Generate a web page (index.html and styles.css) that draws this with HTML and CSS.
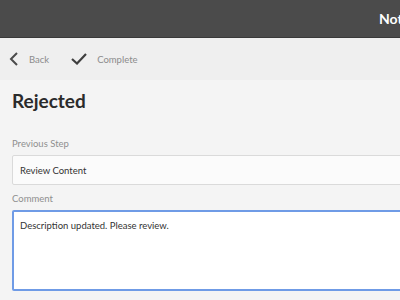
FILE: index.html
```html
<!DOCTYPE html>
<html lang="en">

<head>
    <meta charset="UTF-8" />
    <title>Rejected</title>
    <meta name="viewport" content="width=device-width, initial-scale=1" />
    <link rel="stylesheet" href="styles.css">
</head>

<body>
    <header class="topbar">
        <span class="topbar-title">Notifications</span>
    </header>

    <nav class="toolbar">
        <a class="tool" href="#">
            <svg class="tool-icon" width="10" height="14" viewBox="0 0 10 14">
                <path d="M8 1 L2 7 L8 13" fill="none" stroke="#4b4b4b" stroke-width="2" />
            </svg>
            <span>Back</span>
        </a>
        <a class="tool" href="#">
            <svg class="tool-icon" width="16" height="12" viewBox="0 0 16 12">
                <path d="M1 6 L6 10.5 L15 1" fill="none" stroke="#3f3f3f" stroke-width="2.2" />
            </svg>
            <span>Complete</span>
        </a>
    </nav>

    <main class="content">
        <h1>Rejected</h1>
        <form class="step-form">
            <label class="field-label" for="prevStep">Previous Step</label>
            <input type="text" id="prevStep" class="field" value="Review Content" readonly>

            <label class="field-label" for="comment">Comment</label>
            <textarea id="comment" class="field comment">Description updated. Please review.</textarea>
        </form>
    </main>
</body>

</html>
```

FILE: styles.css
```css
/* base */

* {
    box-sizing: border-box;
    font-family: Lato, "Liberation Sans", sans-serif;
}

body {
    margin: 0;
    width: 400px;
    height: 300px;
    overflow: hidden;
    background: #f4f4f4;
}
/* top bar */

.topbar {
    height: 38px;
    background: #4b4b4b;
    border-bottom: 1px solid #393939;
    display: flex;
    align-items: center;
    padding-left: 379px;
    white-space: nowrap;
    overflow: hidden;
}

.topbar-title {
    color: #fff;
    font-size: 14px;
    font-weight: bold;
}
/* toolbar */

.toolbar {
    height: 42px;
    background: #efefef;
    display: flex;
    align-items: center;
    gap: 22px;
    padding-left: 9px;
}

.tool {
    display: flex;
    align-items: center;
    gap: 10px;
    color: #8c8c8c;
    font-size: 9.5px;
    text-decoration: none;
}
/* content */

.content {
    padding-left: 12px;
}

h1 {
    margin: 0;
    padding-top: 10px;
    font-size: 19px;
    font-weight: bold;
    color: #2b2b2b;
    line-height: 22px;
}

.step-form {
    display: flex;
    flex-direction: column;
    width: 420px;
    margin-top: 25px;
}

.field-label {
    font-size: 9.5px;
    color: #8f8f8f;
    line-height: 14px;
    margin-bottom: 4px;
}

.field {
    font-size: 9.5px;
    color: #333;
    background: #fbfbfb;
    border: 1px solid #dadada;
    border-radius: 2px;
    padding: 0 7px;
    height: 30px;
    margin-bottom: 7px;
    outline: none;
}

.comment {
    height: 81px;
    background: #fff;
    border: 2px solid #6f9be6;
    padding: 8px 6px;
    resize: none;
}
```
